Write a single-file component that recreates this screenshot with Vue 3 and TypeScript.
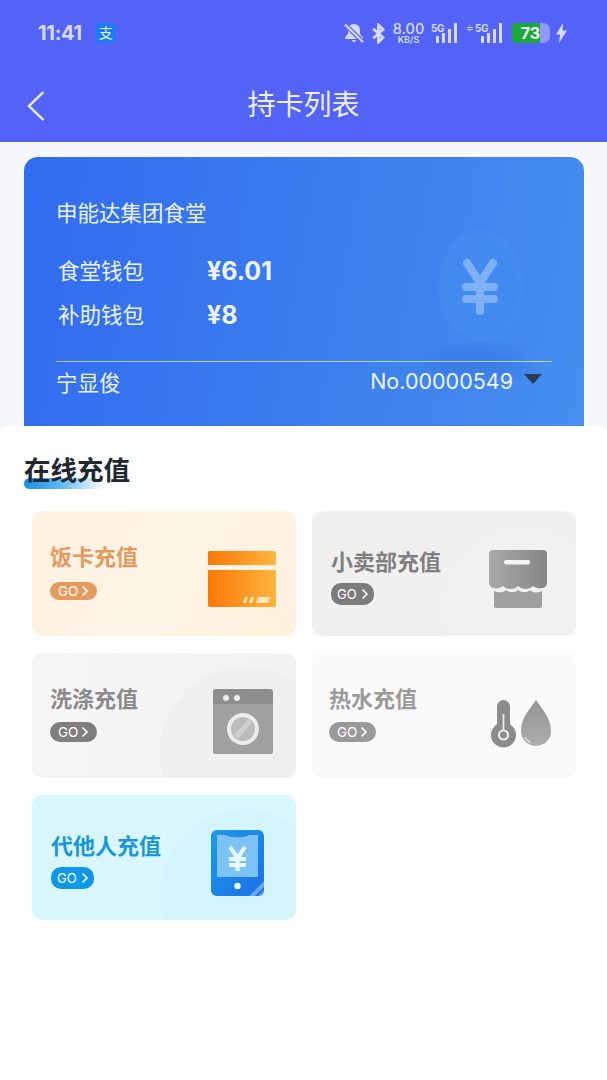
<script setup lang="ts">
interface RechargeCard {
  name: string
  kind: string
}

const wallets = [
  { label: '食堂钱包', amount: '¥6.01' },
  { label: '补助钱包', amount: '¥8' },
]

const cards: RechargeCard[] = [
  { name: '饭卡充值', kind: 'meal' },
  { name: '小卖部充值', kind: 'shop' },
  { name: '洗涤充值', kind: 'wash' },
  { name: '热水充值', kind: 'water' },
  { name: '代他人充值', kind: 'other' },
]
</script>

<template>
  <div class="page">
    <header class="top">
      <div class="status">
        <span class="time">11:41</span>
        <span class="alipay">支</span>
        <div class="statusRight">
          <svg width="20" height="20" viewBox="0 0 20 20">
            <path d="M10 1c-3.800 0-6 2.800-6 6v4l-3 3.500V16h18v-1.500L16 11V7c0-3.200-2.200-6-6-6zM7.500 17h5l-2.500 2.500z" fill="#d6dbfd" />
            <path d="M1 1.500 19 19" stroke="#5363f8" stroke-width="4.500" />
            <path d="M1 1.500 19 19" stroke="#d6dbfd" stroke-width="2.200" />
          </svg>
          <svg class="bt" width="13" height="21" viewBox="0 0 13 21">
            <path d="M1.200 5.800 11 14.500l-4.500 4.500V2l4.500 4.500L1.200 15.200" fill="none" stroke="#d6dbfd" stroke-width="2.800" />
          </svg>
          <div class="speed"><b>8.00</b><i>KB/S</i></div>
          <div class="signal">
            <span class="net">5G</span>
            <span class="bars"><u class="b1"></u><u class="b2"></u><u class="b3"></u><u class="b4"></u></span>
          </div>
          <div class="signal second">
            <span class="updown">≑</span>
            <span class="net">5G</span>
            <span class="bars"><u class="b1"></u><u class="b2"></u><u class="b3"></u><u class="b4"></u></span>
          </div>
          <div class="battery"><span class="level">73</span></div>
          <svg class="bolt" width="11" height="20" viewBox="0 0 11 20">
            <path d="M7 0 0 11.500h4L3 20 11 7.500H6.500z" fill="#d6dbfd" />
          </svg>
        </div>
      </div>
      <div class="nav">
        <svg class="back" width="20" height="32" viewBox="0 0 20 32">
          <path d="M17.500 2 3 16l14.500 14" fill="none" stroke="#f2f3ff" stroke-width="2.400" />
        </svg>
        <h1>持卡列表</h1>
      </div>
    </header>

    <section class="cardArea">
      <div class="walletCard">
        <svg class="coin" width="130" height="170" viewBox="0 0 130 170">
          <defs>
            <filter id="soft"><feGaussianBlur stdDeviation="1.500" /></filter>
            <filter id="softer"><feGaussianBlur stdDeviation="8" /></filter>
          </defs>
          <ellipse cx="60" cy="136" rx="52" ry="16" fill="#2f68d8" opacity=".32" filter="url(#softer)" />
          <ellipse cx="63" cy="59" rx="42" ry="56" fill="#5b9bf3" opacity=".22" filter="url(#soft)" />
          <ellipse cx="65" cy="62" rx="37" ry="49" fill="#418af0" opacity=".7" filter="url(#soft)" />
          <path d="M49 36 62 56 75 36M48 60H76M48 72H76M62 56V84" fill="none" stroke="#7db0f7" stroke-width="8" stroke-linecap="round" />
        </svg>

        <p class="company">申能达集团食堂</p>
        <div class="wallets">
          <div v-for="wallet in wallets" :key="wallet.label" class="walletRow">
            <span class="walletLabel">{{ wallet.label }}</span>
            <strong>{{ wallet.amount }}</strong>
          </div>
        </div>
        <div class="holder">
          <span>宁显俊</span>
          <div class="cardNo">
            <span>No.00000549</span>
            <i class="caret"></i>
          </div>
        </div>
      </div>
    </section>

    <main class="sheet">
      <h2><span>在线充值</span></h2>
      <div class="grid">
        <div v-for="card in cards" :key="card.kind" class="tile" :class="card.kind">
          <i class="glow"></i>
          <div class="tileText">
            <h3>{{ card.name }}</h3>
            <span class="go">GO<svg width="8" height="12" viewBox="0 0 8 12"><path d="M1.500 1.500 6 6l-4.500 4.500" fill="none" stroke="currentColor" stroke-width="1.600" /></svg></span>
          </div>

          <svg v-if="card.kind === 'meal'" class="icon" width="68" height="56" viewBox="0 0 68 56">
            <defs>
              <linearGradient id="mealFill" x1="0" y1="0" x2="1" y2="0">
                <stop offset="0" stop-color="#fd7707" />
                <stop offset="1" stop-color="#fdb53e" />
              </linearGradient>
            </defs>
            <path d="M2 0h64a2 2 0 0 1 2 2v12H0V2a2 2 0 0 1 2-2zM0 19h68v35a2 2 0 0 1-2 2H2a2 2 0 0 1-2-2z" fill="url(#mealFill)" />
            <path d="M37 46h3l-2 6h-3zM43 46h3l-2 6h-3zM50 46h12l-2 6H48z" fill="#ffe7c2" />
          </svg>

          <svg v-else-if="card.kind === 'shop'" class="icon" width="58" height="58" viewBox="0 0 58 58">
            <defs>
              <linearGradient id="shopFill" x1="0" y1="0" x2="1" y2="0">
                <stop offset="0" stop-color="#a9a9a9" />
                <stop offset="1" stop-color="#868686" />
              </linearGradient>
            </defs>
            <path d="M4 0h50a4 4 0 0 1 4 4v29c0 6-9 7-14 3-4 4-11 4-15 0-4 4-11 4-15 0-5 4-14 3-14-3V4a4 4 0 0 1 4-4z" fill="url(#shopFill)" />
            <rect x="15" y="10" width="26" height="4.500" rx="2" fill="#f4f4f4" />
            <path d="M5 41c4 2 9 2 12-1 4 3 9 3 12 0 4 3 9 3 12 0 3 3 8 3 12 1v15a2 2 0 0 1-2 2H7a2 2 0 0 1-2-2z" fill="#9f9f9f" />
          </svg>

          <svg v-else-if="card.kind === 'wash'" class="icon" width="60" height="65" viewBox="0 0 60 65">
            <rect width="60" height="65" rx="3" fill="#8e8e8e" />
            <path d="M0 15h60v47a3 3 0 0 1-3 3H3a3 3 0 0 1-3-3z" fill="#a0a0a0" />
            <circle cx="13" cy="9" r="3" fill="#efefef" />
            <circle cx="24" cy="9" r="3" fill="#efefef" />
            <circle cx="30" cy="40" r="16" fill="#ececec" />
            <circle cx="30" cy="40" r="12" fill="#bcbcbc" />
            <path d="M23 48 37 32" stroke="#cfcfcf" stroke-width="5" />
          </svg>

          <svg v-else-if="card.kind === 'water'" class="icon" width="60" height="48" viewBox="0 0 60 48">
            <defs>
              <linearGradient id="dropFill" x1="0" y1="0" x2="0" y2="1">
                <stop offset="0" stop-color="#949494" />
                <stop offset="1" stop-color="#adadad" />
              </linearGradient>
            </defs>
            <rect x="6" y="0" width="13" height="34" rx="6.500" fill="#8b8b8b" />
            <circle cx="12.500" cy="35" r="12.500" fill="#8b8b8b" />
            <path d="M12.500 14v17" stroke="#ececec" stroke-width="1.800" />
            <circle cx="12.500" cy="35" r="4.500" fill="none" stroke="#ececec" stroke-width="2.200" />
            <path d="M45 0c5 8 15 17 15 31a15 15 0 0 1-30 0C30 17 40 8 45 0z" fill="url(#dropFill)" />
            <path d="M34 37c1.500 3 3.500 5 6 5.500" fill="none" stroke="#e6e6e6" stroke-width="1.200" />
          </svg>

          <svg v-else class="icon" width="53" height="66" viewBox="0 0 53 66">
            <defs>
              <linearGradient id="phoneFill" x1="0" y1="0" x2="1" y2="1">
                <stop offset="0" stop-color="#1e9be8" />
                <stop offset="1" stop-color="#1a6fe8" />
              </linearGradient>
            </defs>
            <rect width="53" height="66" rx="6" fill="url(#phoneFill)" />
            <path d="M6 5h9c3 3 20 3 23 0h9v42H6z" fill="#7cc2f4" />
            <path d="M19 17 26.500 28 34 17M18 29H35M18 35H35M26.500 28V41" fill="none" stroke="#eaf8ff" stroke-width="4" />
            <circle cx="26.500" cy="56" r="3.200" fill="#f2fbff" />
            <path d="M38 66 53 51v6L44 66zM47 66l6-6v3l-3 3z" fill="#6aa5f2" />
          </svg>
        </div>
      </div>
    </main>
  </div>
</template>

<style>
html,
body {
  margin: 0;
  background: #fff;
}
</style>

<style scoped>
.page {
  width: 607px;
  height: 1080px;
  overflow: hidden;
  background: #f6f7fa;
  font-family: Inter, "Noto Sans CJK SC", "Noto Sans", sans-serif;
}

.top {
  height: 142px;
  background: #5363f8;
}

.status {
  display: flex;
  align-items: center;
  height: 66px;
  padding: 0 40px 0 38px;
  color: #d6dbfd;
}

.time {
  font-size: 20px;
  font-weight: 700;
  letter-spacing: -0.3px;
}

.alipay {
  width: 20px;
  height: 20px;
  margin-left: 14px;
  border-radius: 4px;
  background: #1c7cf2;
  color: #e6f2ff;
  font-size: 14px;
  line-height: 20px;
  text-align: center;
}

.statusRight {
  display: flex;
  align-items: center;
  margin-left: auto;
}

.bt {
  margin-left: 8px;
}

.speed {
  display: flex;
  flex-direction: column;
  align-items: center;
  width: 33px;
  margin-left: 7px;
}

.speed b {
  font-size: 14.500px;
  font-weight: 500;
  line-height: 13px;
}

.speed i {
  font-size: 9px;
  font-style: normal;
  font-weight: 600;
  line-height: 9px;
}

.signal {
  position: relative;
  display: flex;
  align-items: flex-end;
  justify-content: flex-end;
  width: 26px;
  height: 20px;
  margin-left: 6px;
}

.signal.second {
  width: 36px;
  margin-left: 9px;
}

.net {
  position: absolute;
  top: 0;
  left: 0;
  font-size: 10px;
  font-weight: 700;
  line-height: 10px;
  letter-spacing: -0.3px;
}

.second .net {
  left: 9px;
}

.updown {
  position: absolute;
  top: 0;
  left: 0;
  font-size: 9px;
  line-height: 10px;
}

.bars {
  display: flex;
  align-items: flex-end;
  gap: 3px;
}

.bars u {
  width: 3px;
  background: #d6dbfd;
}

.b1 {
  height: 7px;
}

.b2 {
  height: 10px;
}

.b3 {
  height: 14px;
}

.b4 {
  height: 20px;
}

.battery {
  width: 38px;
  height: 20px;
  margin-left: 10px;
  border-radius: 4px 7px 7px 4px;
  background: #8e9afa;
}

.level {
  display: block;
  width: 28px;
  height: 20px;
  border-radius: 4px 0 0 4px;
  background: #1fa83a;
  color: #f0fff2;
  font-size: 16px;
  font-weight: 700;
  line-height: 20px;
  text-align: right;
}

.bolt {
  margin-left: 6px;
}

.nav {
  position: relative;
  display: flex;
  align-items: center;
  justify-content: center;
  height: 76px;
}

.back {
  position: absolute;
  left: 26px;
  top: 24px;
}

h1 {
  margin: 2px 0 0;
  color: #eef0ff;
  font-size: 28px;
  font-weight: 400;
  line-height: 74px;
}

.cardArea {
  height: 284px;
  padding: 15px 23px 0 24px;
  box-sizing: border-box;
  overflow: hidden;
}

.walletCard {
  position: relative;
  height: 269px;
  padding: 40px 32px 0 32px;
  box-sizing: border-box;
  border-radius: 14px 14px 0 0;
  background: linear-gradient(100deg, #316bf0 0%, #3d80ee 60%, #468ff0 100%);
  color: #eef4ff;
}

.coin {
  position: absolute;
  top: 70px;
  left: 394px;
}

.company {
  position: relative;
  margin: 0;
  font-size: 21.500px;
  line-height: 32px;
}

.wallets {
  position: relative;
  margin-top: 20px;
}

.walletRow {
  display: flex;
  align-items: center;
  height: 44px;
  padding-left: 2px;
}

.walletLabel {
  width: 149px;
  margin-bottom: 4px;
  font-size: 21.500px;
}

.walletRow strong {
  font-size: 25px;
  font-weight: 700;
}

.holder {
  position: relative;
  display: flex;
  align-items: center;
  justify-content: space-between;
  height: 38px;
  margin-top: 24px;
  border-top: 1.500px solid rgba(255, 255, 255, 0.65);
  font-size: 21.500px;
}

.cardNo {
  display: flex;
  align-items: center;
  font-size: 21.500px;
}

.caret {
  width: 0;
  height: 0;
  margin: -4px 10px 0 11px;
  border-left: 9px solid transparent;
  border-right: 9px solid transparent;
  border-top: 10px solid #2c3a5a;
}

.sheet {
  height: 654px;
  padding: 0 31px 0 32px;
  border-radius: 6px 6px 0 0;
  background: #fff;
}

h2 {
  display: flex;
  height: 85px;
  margin: 0 0 0 -8px;
  align-items: flex-start;
}

h2 span {
  position: relative;
  z-index: 0;
  margin-top: 25px;
  color: #22262e;
  font-size: 26.500px;
  font-weight: 700;
  line-height: 38px;
}

h2 span::after {
  content: "";
  position: absolute;
  left: 0;
  bottom: 0;
  width: 80px;
  height: 11px;
  border-radius: 6px 0 0 6px;
  background: linear-gradient(90deg, #1a8fe8 0%, #5ab8f0 45%, rgba(255, 255, 255, 0) 100%);
  z-index: -1;
}

.grid {
  display: grid;
  grid-template-columns: 264px 264px;
  grid-auto-rows: 125px;
  column-gap: 16px;
  row-gap: 17px;
}

.tile {
  position: relative;
  display: flex;
  align-items: center;
  justify-content: space-between;
  overflow: hidden;
  border-radius: 10px;
}

.glow {
  position: absolute;
  right: -34px;
  top: 14px;
  width: 170px;
  height: 170px;
  border-radius: 50%;
}

.tileText {
  position: relative;
  display: flex;
  flex-direction: column;
  align-items: flex-start;
}

h3 {
  margin: 0;
  font-size: 22px;
  font-weight: 700;
  line-height: 32px;
}

.go {
  display: flex;
  align-items: center;
  gap: 3px;
  height: 20px;
  padding: 0 8px;
  border-radius: 10px;
  color: #fff;
  font-size: 13.500px;
}

.icon {
  position: relative;
}

.meal {
  padding: 0 20px 0 18px;
  background: linear-gradient(120deg, #fdf1e0 0%, #fff5e7 55%, #fef0db 100%);
}

.meal .glow {
  display: none;
}

.meal .tileText {
  margin-top: -6px;
}

.meal h3 {
  color: #e39a5e;
}

.meal .go {
  margin-top: 9px;
  height: 18px;
  background: #e69a5c;
}

.meal .icon {
  margin-top: 11px;
}

.shop {
  padding: 0 29px 0 19px;
  background: #f0f0f0;
}

.shop .glow {
  background: rgba(250, 250, 250, 0.18);
}

.shop .tileText {
  margin-top: 4px;
}

.shop h3 {
  color: #7f7f7f;
}

.shop .go {
  margin-top: 5px;
  height: 22px;
  padding: 0 5px 0 6px;
  background: #7c7c7c;
  gap: 4px;
  font-size: 13px;
}

.shop .icon {
  margin-top: 10px;
}

.wash {
  padding: 0 23px 0 18px;
  background: linear-gradient(90deg, #f6f6f6 0%, #f2f2f2 100%);
}

.wash .glow {
  background: rgba(225, 225, 225, 0.16);
}

.wash .tileText {
  margin-top: -6px;
}

.wash h3 {
  color: #8a8a8a;
}

.wash .go {
  margin-top: 7px;
  background: #7e7e7e;
}

.wash .icon {
  margin-top: 11px;
}

.water {
  padding: 0 25px 0 17px;
  background: #fafafa;
}

.water .glow {
  display: none;
}

.water .tileText {
  margin-top: -6px;
}

.water h3 {
  color: #9a9a9a;
}

.water .go {
  margin-top: 7px;
  background: #9a9a9a;
}

.water .icon {
  margin-top: 16px;
}

.other {
  padding: 0 32px 0 19px;
  background: #d9f7fe;
}

.other .glow {
  background: rgba(200, 240, 250, 0.22);
}

.other .tileText {
  margin-top: 4px;
}

.other h3 {
  color: #1b97d9;
}

.other .go {
  margin-top: 5px;
  height: 22px;
  padding: 0 5px 0 6px;
  gap: 4px;
  background: #0f97ea;
  font-size: 13px;
}

.other .icon {
  margin-top: 10px;
}
</style>
